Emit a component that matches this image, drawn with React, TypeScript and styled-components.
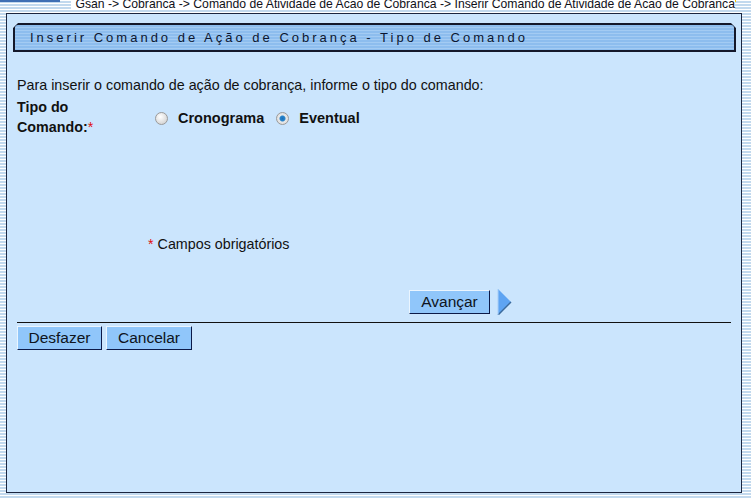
import React from 'react';
import styled, { createGlobalStyle } from 'styled-components';

const GlobalStyle = createGlobalStyle`
  html, body {
    margin: 0;
    padding: 0;
  }
  body {
    width: 751px;
    height: 498px;
    overflow: hidden;
    font-family: "Liberation Sans", Arial, sans-serif;
    background: repeating-linear-gradient(
      to bottom,
      #ffffff 0px,
      #ffffff 1px,
      #c2d9ee 1px,
      #c2d9ee 3px
    );
  }
`;

const TopBar = styled.div`
  height: 13px;
  display: flex;
  justify-content: flex-end;
  align-items: flex-start;
  padding-right: 16px;
  background:
    linear-gradient(#3f6fb4, #3f6fb4) 0 0 / 60px 2px no-repeat,
    linear-gradient(#f7c400, #f7c400) 552px 0 / 184px 2px no-repeat;
  overflow: hidden;
`;

const Breadcrumb = styled.span`
  font-size: 12.2px;
  line-height: 12px;
  margin-top: -2px;
  padding-left: 4px;
  background: #ffffff;
  color: #101018;
  white-space: nowrap;
`;

const Panel = styled.div`
  margin-left: 6px;
  width: 736px;
  height: 480px;
  box-sizing: border-box;
  border: 1px solid #1c2640;
  background: #cbe5fd;
  padding: 9px 5px 0 6px;
  display: flex;
  flex-direction: column;
`;

const Header = styled.div`
  height: 29px;
  box-sizing: border-box;
  border: 2px solid #14182a;
  clip-path: polygon(5px 0, calc(100% - 5px) 0, 100% 5px, 100% 100%, 0 100%, 0 5px);
  border-radius: 5px 5px 0 0;
  background: repeating-linear-gradient(
    to bottom,
    #8dbdee 0px,
    #8dbdee 2px,
    #a3cbf3 2px,
    #a3cbf3 3px
  );
  display: flex;
  align-items: center;
  padding-left: 15px;
  font-size: 13px;
  letter-spacing: 3px;
  color: #0c1630;
`;

const Body = styled.div`
  padding: 0 4px;
  display: flex;
  flex-direction: column;
`;

const Intro = styled.p`
  margin: 25px 0 0 0;
  font-size: 14.3px;
  line-height: 16px;
  color: #111;
`;

const FieldRow = styled.div`
  display: flex;
  align-items: center;
  margin-top: 4px;
`;

const Label = styled.div`
  width: 138px;
  font-size: 14.3px;
  font-weight: bold;
  line-height: 20px;
  color: #111;
`;

const Required = styled.span`
  color: #e01010;
  font-weight: normal;
`;

const Options = styled.div`
  display: flex;
  align-items: center;
  margin-top: 2px;
`;

const Option = styled.label`
  display: flex;
  align-items: center;
  font-size: 14.5px;
  font-weight: bold;
  color: #111;
  margin-right: 12px;
`;

const Radio = styled.span<{ $checked?: boolean }>`
  width: 11px;
  height: 11px;
  border-radius: 50%;
  border: 1px solid #9a9a9a;
  margin-right: 10px;
  background: ${(p) =>
    p.$checked
      ? 'radial-gradient(circle, #1d6fb8 0, #2a86cc 2.5px, #e9e9e9 3.5px, #d4d4d4 100%)'
      : 'radial-gradient(circle at 40% 35%, #ffffff 0, #e4e4e4 50%, #c8c8c8 100%)'};
`;

const Note = styled.div`
  margin: 99px 0 0 131px;
  font-size: 14.3px;
  line-height: 16px;
  color: #111;
`;

const ActionRow = styled.div`
  display: flex;
  align-items: center;
  margin: 37px 0 0 392px;
  gap: 7px;
`;

const Button = styled.button<{ $width: number }>`
  width: ${(p) => p.$width}px;
  height: 24px;
  padding: 0;
  font-family: "Liberation Sans", Arial, sans-serif;
  font-size: 15.5px;
  color: #0e1420;
  background: #90c6fa;
  border: 1px solid;
  border-color: #eaf5ff #0c1a48 #0c1a48 #eaf5ff;
  cursor: pointer;
`;

const Divider = styled.hr`
  margin: 7px 0 0 0;
  width: 714px;
  border: none;
  border-top: 1px solid #111;
`;

const ButtonRow = styled.div`
  display: flex;
  gap: 4px;
  margin-top: 3px;
`;

function NextArrow() {
  return (
    <svg width="15" height="26" viewBox="0 0 15 26">
      <polygon points="1,0 14,13 1,26" fill="#5ea4f2" />
      <polyline points="14,13 1,26" stroke="#3b6a9c" strokeWidth="1.5" fill="none" />
      <polyline points="1,0 1,26" stroke="#a9cff7" strokeWidth="1" fill="none" />
    </svg>
  );
}

export default function App() {
  const [tipo, setTipo] = React.useState<'cronograma' | 'eventual'>('eventual');

  return (
    <>
      <GlobalStyle />
      <TopBar>
        <Breadcrumb>
          Gsan -&gt; Cobranca -&gt; Comando de Atividade de Acao de Cobranca -&gt; Inserir Comando de Atividade de Acao de Cobranca
        </Breadcrumb>
      </TopBar>
      <Panel>
        <Header>Inserir Comando de Ação de Cobrança - Tipo de Comando</Header>
        <Body>
          <Intro>Para inserir o comando de ação de cobrança, informe o tipo do comando:</Intro>
          <FieldRow>
            <Label>
              Tipo do
              <br />
              Comando:<Required>*</Required>
            </Label>
            <Options>
              <Option onClick={() => setTipo('cronograma')}>
                <Radio $checked={tipo === 'cronograma'} />
                Cronograma
              </Option>
              <Option onClick={() => setTipo('eventual')}>
                <Radio $checked={tipo === 'eventual'} />
                Eventual
              </Option>
            </Options>
          </FieldRow>
          <Note>
            <Required>*</Required> Campos obrigatórios
          </Note>
          <ActionRow>
            <Button $width={81}>Avançar</Button>
            <NextArrow />
          </ActionRow>
          <Divider />
          <ButtonRow>
            <Button $width={85}>Desfazer</Button>
            <Button $width={86}>Cancelar</Button>
          </ButtonRow>
        </Body>
      </Panel>
    </>
  );
}
